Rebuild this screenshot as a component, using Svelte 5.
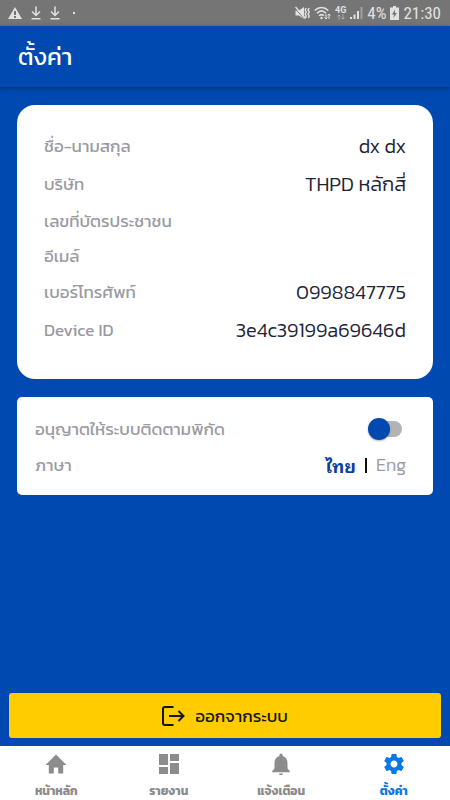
<script>
  const profile = [
    { label: 'ชื่อ-นามสกุล', value: 'dx dx' },
    { label: 'บริษัท', value: 'THPD หลักสี่' },
    { label: 'เลขที่บัตรประชาชน', value: '' },
    { label: 'อีเมล์', value: '' },
    { label: 'เบอร์โทรศัพท์', value: '0998847775' },
    { label: 'Device ID', value: '3e4c39199a69646d' }
  ];

  const tabs = [
    { label: 'หน้าหลัก', icon: 'M9.800 21.500v-6h4.400v6h5v-8.500h3.300L12 2.500 1.500 13h3.300v8.500z' },
    { label: 'รายงาน', icon: 'M2 2h9v11H2zM13 2h9v7h-9zM2 15h9v7H2zM13 11h9v11h-9z' },
    {
      label: 'แจ้งเตือน',
      icon: 'M12 23c1.100 0 2-.7 2-1.600h-4c0 .9.9 1.600 2 1.600zM18.500 16.500V11c0-3.400-1.700-6.100-4.900-6.900V3.200C13.600 2.300 13 1.500 12 1.500s-1.600.8-1.600 1.700v.9C7.200 4.900 5.500 7.600 5.500 11v5.500L3.200 19v1.300h17.600V19z'
    },
    {
      label: 'ตั้งค่า',
      icon: 'M19.43 12.98c.04-.32.07-.64.07-.98s-.03-.66-.07-.98l2.110-1.650c.19-.15.24-.42.12-.64l-2-3.460c-.12-.22-.39-.3-.61-.22l-2.490 1c-.52-.4-1.080-.73-1.690-.98l-.38-2.650C14.460 2.180 14.250 2 14 2h-4c-.25 0-.46.18-.49.42l-.38 2.650c-.61.25-1.170.59-1.690.98l-2.490-1c-.23-.09-.49 0-.61.22l-2 3.460c-.13.22-.07.49.12.64l2.110 1.650c-.04.32-.07.65-.07.98s.03.66.07.98l-2.110 1.650c-.19.15-.24.42-.12.64l2 3.460c.12.22.39.3.61.22l2.490-1c.52.4 1.080.73 1.690.98l.38 2.650c.03.24.24.42.49.42h4c.25 0 .46-.18.49-.42l.38-2.650c.61-.25 1.170-.59 1.690-.98l2.490 1c.23.09.49 0 .61-.22l2-3.460c.12-.22.07-.49-.12-.64zM12 15.500c-1.930 0-3.500-1.570-3.500-3.500s1.570-3.500 3.500-3.500 3.500 1.570 3.500 3.500-1.570 3.500-3.500 3.500z'
    }
  ];

  let tracking = $state(false);
  let language = $state('th');
  let activeTab = $state(3);
</script>

<div class="screen">
  <div class="status">
    <div class="group">
      <svg width="14" height="14" viewBox="0 0 14 14" aria-hidden="true">
        <path fill="currentColor" fill-rule="evenodd" d="M7 1 14 13H0zM6 5v4h2V5zM6 10v2h2v-2z" />
      </svg>
      {#each [0, 1] as n (n)}
        <svg width="10" height="14" viewBox="0 0 10 14" fill="none" stroke="currentColor" stroke-width="1.500" aria-hidden="true">
          <path d="M5 .5v9M1 5.500l4 4 4-4M.5 12.800h9" />
        </svg>
      {/each}
      <span class="dot"></span>
    </div>
    <div class="group right">
      <svg width="15" height="14" viewBox="0 0 15 14" aria-hidden="true">
        <path fill="currentColor" d="M.5 4.500H4L9 1v12L4 9.500H.5z" />
        <path d="M0 2.500l9.500 10.500" stroke="#757575" stroke-width="1" />
        <path d="M.5 1l10 11.500" stroke="currentColor" stroke-width="1.500" />
        <path d="M11 2l-.8 2 1 2-1 2 1 2-.8 2M14 2l-.8 2 1 2-1 2 1 2-.8 2" fill="none" stroke="currentColor" stroke-width="1.500" />
      </svg>
      <svg width="17" height="14" viewBox="0 0 17 14" fill="none" stroke="currentColor" stroke-width="1.600" aria-hidden="true">
        <path d="M.7 4.500c4-4 9.600-4 13.600 0M3 7.200c3-3 6-3 9 0M5 9.800c1.700-1.700 3.300-1.700 5 0" />
        <circle cx="7.500" cy="12" r="1.200" fill="currentColor" stroke="none" />
        <path d="M12 8v5M10.500 11.500 12 13l1.500-1.500M15 13V8M13.700 9.500 15 8l1.500 1.500" stroke-width="1" />
      </svg>
      <span class="network">
        <span>4G</span>
        <svg width="8" height="6" viewBox="0 0 8 6" fill="none" stroke="currentColor" aria-hidden="true">
          <path d="M2 6V1M.5 2.500 2 1l1.500 1.500M6 0v5M4.500 3.500 6 5l1.500-1.500" opacity=".5" />
        </svg>
      </span>
      <svg width="13" height="14" viewBox="0 0 13 14" fill="currentColor" aria-hidden="true">
        <path d="M0 11h2v2H0zM3.500 8.500h2V13h-2z" />
        <path d="M7 5h2v8H7z" />
        <path d="M10.500 1h2v12h-2z" opacity=".4" />
      </svg>
      <span>4%</span>
      <svg width="9" height="14" viewBox="0 0 9 14" aria-hidden="true">
        <path fill="currentColor" fill-rule="evenodd" d="M3 0h3v1.500h3V14H0V1.500h3zM5 3.500 2 8.500h2L3.500 12 7 7H5z" />
      </svg>
      <time>21:30</time>
    </div>
  </div>

  <header><h1>ตั้งค่า</h1></header>

  <main>
    <dl class="card profile">
      {#each profile as item (item.label)}
        <div class="row" class:empty={!item.value}>
          <dt>{item.label}</dt>
          <dd>{item.value}</dd>
        </div>
      {/each}
    </dl>

    <section class="card options">
      <div class="option">
        <label for="tracking">อนุญาตให้ระบบติดตามพิกัด</label>
        <input id="tracking" class="switch" type="checkbox" role="switch" bind:checked={tracking} />
      </div>
      <div class="option">
        <span id="language">ภาษา</span>
        <div class="languages" role="group" aria-labelledby="language">
          <button class:chosen={language === 'th'} onclick={() => (language = 'th')}>ไทย</button>
          <span class="bar"></span>
          <button class:chosen={language === 'en'} onclick={() => (language = 'en')}>Eng</button>
        </div>
      </div>
    </section>

    <button class="logout">
      <svg width="23" height="20" viewBox="0 0 23 20" fill="none" stroke="currentColor" stroke-width="2" aria-hidden="true">
        <path d="M11.500 1H3Q1 1 1 3v14q0 2 2 2h8.500M7 10h14M16.500 5l5 5-5 5" />
      </svg>
      ออกจากระบบ
    </button>
  </main>

  <nav>
    {#each tabs as tab, i (tab.label)}
      <a href="#tab-{i}" class:active={i === activeTab} onclick={() => (activeTab = i)}>
        <svg width="24" height="24" viewBox="0 0 24 24" fill="currentColor" aria-hidden="true"><path d={tab.icon} /></svg>
        <span>{tab.label}</span>
      </a>
    {/each}
  </nav>
</div>

<style>
  :global(body) {
    margin: 0;
  }

  .screen {
    display: flex;
    flex-direction: column;
    min-height: 100vh;
    background: #0049b0;
    font-family: Kanit, Prompt, 'Noto Sans', 'Noto Sans Thai', sans-serif;
  }

  button {
    padding: 0;
    border: 0;
    background: none;
    font: inherit;
    color: inherit;
    cursor: pointer;
  }

  .status {
    display: flex;
    align-items: center;
    justify-content: space-between;
    height: 26px;
    padding: 0 9px 0 8px;
    background: #757575;
    color: #e2e2e2;
    font-family: 'Roboto Condensed', Roboto, sans-serif;
    font-size: 17px;
  }

  .group {
    display: flex;
    align-items: center;
    gap: 9px;
  }

  .right {
    gap: 4px;
  }

  .dot {
    width: 2px;
    height: 2px;
    margin-left: 4px;
    background: currentColor;
  }

  .network {
    display: flex;
    flex-direction: column;
    align-items: center;
    font-family: Roboto, sans-serif;
    font-size: 9px;
    font-weight: 700;
    line-height: 8px;
  }

  header {
    display: flex;
    align-items: center;
    height: 61px;
    padding: 0 18px;
    box-shadow: 0 1px 4px rgb(0 0 0 / 40%);
    color: #fff;
  }

  h1 {
    margin: 0;
    font-size: 24px;
    font-weight: 400;
    line-height: 32px;
  }

  main {
    display: flex;
    flex: 1;
    flex-direction: column;
    padding: 18px 9px 8px;
  }

  .card {
    margin: 0 8px 18px;
    background: #fff;
    color: #9a9aa2;
    font-size: 17px;
    line-height: 24px;
  }

  .profile {
    padding: 22px 27px 30px;
    border-radius: 18px;
  }

  .row,
  .option {
    display: flex;
    align-items: center;
    justify-content: space-between;
  }

  .row {
    height: 38px;
  }

  .row.empty {
    height: 35px;
  }

  dd {
    margin: 0;
    color: #1e2337;
    font-size: 20px;
    font-weight: 300;
  }

  .options {
    padding: 14px 27px 12px 18px;
    border-radius: 5px;
  }

  .option {
    height: 36px;
  }

  .switch {
    position: relative;
    width: 34px;
    height: 16px;
    margin: 0 4px 0 0;
    border-radius: 8px;
    appearance: none;
    background: linear-gradient(#b3b3b3, #b3b3b3) right / 28px 100% no-repeat;
    cursor: pointer;
  }

  .switch::before {
    position: absolute;
    top: -3px;
    left: 0;
    width: 22px;
    height: 22px;
    border-radius: 50%;
    background: #0049b0;
    box-shadow: 0 1px 2px rgb(0 0 0 / 30%);
    content: '';
  }

  .switch:checked::before {
    left: 12px;
  }

  .languages {
    display: flex;
    align-items: center;
    gap: 9px;
    font-size: 18px;
    font-weight: 300;
  }

  .bar {
    width: 2px;
    height: 15px;
    background: #101010;
  }

  .chosen {
    color: #0a3f9e;
    font-family: 'Noto Sans Thai Looped', 'Noto Sans Thai', 'Noto Sans', sans-serif;
    font-weight: 700;
  }

  .logout {
    display: flex;
    align-items: center;
    justify-content: center;
    gap: 10px;
    height: 45px;
    margin-top: auto;
    border-radius: 3px;
    background: #fc0;
    color: #151515;
    font-size: 17px;
    line-height: 24px;
  }

  nav {
    display: flex;
    height: 54px;
    background: #fff;
  }

  nav a {
    display: flex;
    flex: 1;
    flex-direction: column;
    align-items: center;
    gap: 6px;
    padding-top: 6px;
    color: #8c8c8c;
    font-size: 12px;
    font-weight: 700;
    line-height: 18px;
    text-decoration: none;
  }

  nav a.active {
    color: #0878e8;
  }
</style>
